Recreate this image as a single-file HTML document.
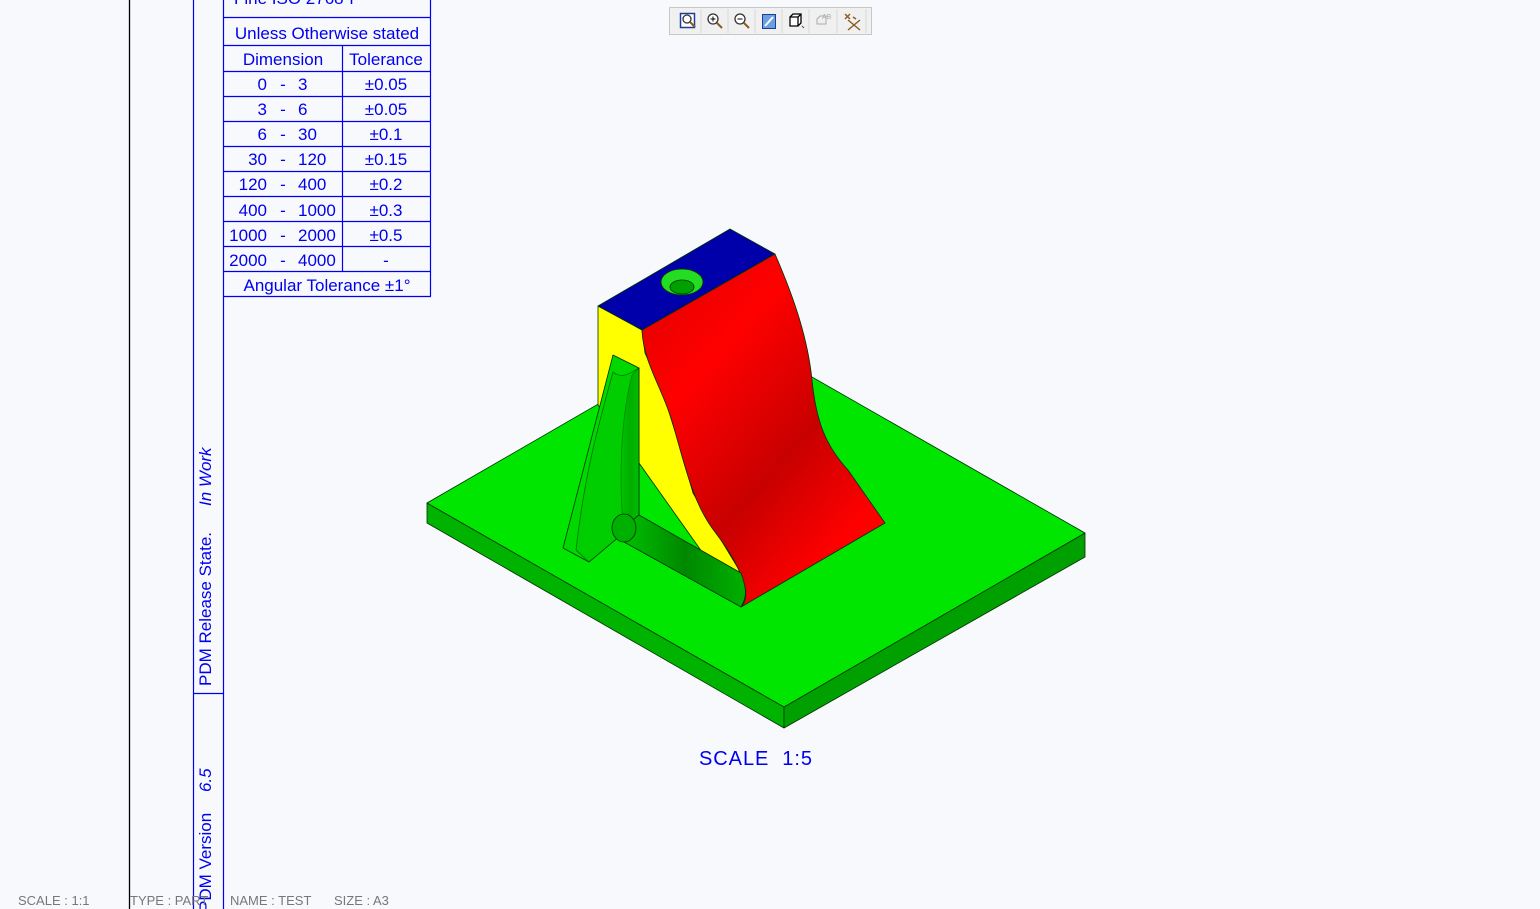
<!DOCTYPE html>
<html><head><meta charset="utf-8"><style>
html,body{margin:0;padding:0;background:#f8f9fd;}
svg{display:block}
text{font-family:"Liberation Sans",sans-serif;}
</style></head><body>
<svg width="1540" height="909" viewBox="0 0 1540 909" xmlns="http://www.w3.org/2000/svg">
<rect width="1540" height="909" fill="#f8f9fd"/>
<line x1="129.5" y1="0" x2="129.5" y2="909" stroke="#000" stroke-width="1.3"/>
<line x1="193.5" y1="0" x2="193.5" y2="909" stroke="#0000ee" stroke-width="1.2"/>
<line x1="223.5" y1="0" x2="223.5" y2="909" stroke="#0000ee" stroke-width="1.2"/>
<line x1="193" y1="693.5" x2="223" y2="693.5" stroke="#0000ee" stroke-width="1.2"/>
<g fill="#0000ee" font-size="17">
<text transform="translate(211,686) rotate(-90)">PDM Release State.</text>
<text transform="translate(211,506) rotate(-90)" font-style="italic">In Work</text>
<text transform="translate(211,912) rotate(-90)">PDM Version</text>
<text transform="translate(211,792) rotate(-90)" font-style="italic">6.5</text>
</g>
<g stroke="#0000ee" stroke-width="1.2" fill="none">
<line x1="430.5" y1="0" x2="430.5" y2="296"/>
<line x1="223" y1="296.5" x2="431" y2="296.5"/>
<line x1="342.5" y1="46" x2="342.5" y2="271"/>
<line x1="223" y1="17.5" x2="431" y2="17.5"/>
<line x1="223" y1="45.5" x2="431" y2="45.5"/>
<line x1="223" y1="71.5" x2="431" y2="71.5"/>
<line x1="223" y1="96.5" x2="431" y2="96.5"/>
<line x1="223" y1="121.5" x2="431" y2="121.5"/>
<line x1="223" y1="146.5" x2="431" y2="146.5"/>
<line x1="223" y1="171.5" x2="431" y2="171.5"/>
<line x1="223" y1="196.5" x2="431" y2="196.5"/>
<line x1="223" y1="221.5" x2="431" y2="221.5"/>
<line x1="223" y1="246.5" x2="431" y2="246.5"/>
<line x1="223" y1="271.5" x2="431" y2="271.5"/>
</g>
<g fill="#0000ee" font-size="17" text-anchor="middle">
<text x="294" y="4">Fine ISO 2768-f</text>
<text x="327" y="39">Unless Otherwise stated</text>
<text x="283" y="65">Dimension</text>
<text x="386" y="65">Tolerance</text>
<text x="386" y="90">±0.05</text>
<text x="386" y="115">±0.05</text>
<text x="386" y="140">±0.1</text>
<text x="386" y="165">±0.15</text>
<text x="386" y="190">±0.2</text>
<text x="386" y="216">±0.3</text>
<text x="386" y="241">±0.5</text>
<text x="386" y="266">-</text>
<text x="327" y="291">Angular Tolerance ±1°</text>
</g>
<g fill="#0000ee" font-size="17">
<g text-anchor="end">
<text x="267" y="90">0</text><text x="267" y="115">3</text><text x="267" y="140">6</text>
<text x="267" y="165">30</text><text x="267" y="190">120</text><text x="267" y="216">400</text>
<text x="267" y="241">1000</text><text x="267" y="266">2000</text>
</g>
<g text-anchor="middle">
<text x="283" y="90">-</text><text x="283" y="115">-</text><text x="283" y="140">-</text><text x="283" y="165">-</text>
<text x="283" y="190">-</text><text x="283" y="216">-</text><text x="283" y="241">-</text><text x="283" y="266">-</text>
</g>
<text x="298" y="90">3</text><text x="298" y="115">6</text><text x="298" y="140">30</text>
<text x="298" y="165">120</text><text x="298" y="190">400</text><text x="298" y="216">1000</text>
<text x="298" y="241">2000</text><text x="298" y="266">4000</text>
</g>
<rect x="669.5" y="7.5" width="202" height="27" fill="#f0f0f0" stroke="#c8c8c8"/>
<g stroke="#d8d8d8"><line x1="701" y1="9" x2="701" y2="33"/><line x1="728" y1="9" x2="728" y2="33"/><line x1="755" y1="9" x2="755" y2="33"/><line x1="782" y1="9" x2="782" y2="33"/><line x1="809" y1="9" x2="809" y2="33"/><line x1="837" y1="9" x2="837" y2="33"/><line x1="866" y1="9" x2="866" y2="33"/></g>
<rect x="680.5" y="13.5" width="14" height="14" fill="#fff" stroke="#1a3f9a" stroke-width="1.5"/>
<circle cx="687" cy="19" r="4" fill="none" stroke="#333" stroke-width="1.3"/><line x1="690" y1="22" x2="695" y2="27" stroke="#8a5a20" stroke-width="2"/>
<circle cx="713" cy="19" r="5" fill="#fff" stroke="#333" stroke-width="1.3"/><path d="M710.5 19h5M713 16.5v5" stroke="#000"/><line x1="717" y1="23" x2="722" y2="28" stroke="#8a5a20" stroke-width="2"/>
<circle cx="740" cy="19" r="5" fill="#fff" stroke="#333" stroke-width="1.3"/><path d="M737.5 19h5" stroke="#000"/><line x1="744" y1="23" x2="749" y2="28" stroke="#8a5a20" stroke-width="2"/>
<rect x="762.5" y="14.5" width="13" height="14" fill="#6aa0e0" stroke="#1a3f9a"/><path d="M765 26l8-9" stroke="#fff" stroke-width="2"/>
<path d="M790 17l3-3h8v9l-3 3h-8z" fill="#fff" stroke="#000" stroke-width="1.3"/><path d="M790 17h8v9M798 17l3-3" fill="none" stroke="#000" stroke-width="1.3"/><path d="M802 26l2 2" stroke="#555"/>
<path d="M817 19l3-3h6v8h-9z" fill="none" stroke="#aaa"/><text x="822" y="19" font-size="7" fill="#aaa">AB</text>
<path d="M845 14l5 5M850 14l-5 5M848 20l12 10M860 20l-12 10M853 17l3 2" stroke="#8a5a20" stroke-width="1.4"/>
<g stroke="#003000" stroke-width="0.8" stroke-linejoin="round">
<polygon points="427,503 784,707 784,728 427,523" fill="#00b300"/>
<polygon points="784,707 1085,533 1085,557 784,728" fill="#00a000"/>
<polygon points="427,503 728,329 1085,533 784,707" fill="#00e600"/>
<polygon points="598,306 642,330 645,353 663,393 680,447 693,493 715,530 741,573 745,587 741,607 598,405" fill="#ffff00"/>
<polygon points="598,306 730,229 775,254 642,330" fill="#0000aa"/>
<ellipse cx="682" cy="282" rx="21" ry="13" fill="#22dd22"/>
<ellipse cx="682" cy="287" rx="12" ry="7" fill="#00a000"/>
<defs><linearGradient id="rg" x1="0" y1="0" x2="1" y2="1.3">
<stop offset="0" stop-color="#dd0000"/><stop offset="0.25" stop-color="#ff0000"/><stop offset="0.5" stop-color="#c80000"/><stop offset="0.7" stop-color="#ff0000"/><stop offset="1" stop-color="#ff0000"/></linearGradient>
<linearGradient id="gg" x1="0" y1="0" x2="1" y2="0"><stop offset="0" stop-color="#00c000"/><stop offset="0.5" stop-color="#008800"/><stop offset="1" stop-color="#00b000"/></linearGradient></defs>
<path d="M642,330 L775,254 C795,300 808,340 812,380 C816,420 825,445 848,470 L885,523 L741,607 C744,604 747,598 745,588 C741,570 730,552 715,532 C690,500 683,455 670,415 C660,385 643,360 642,330 Z" fill="url(#rg)"/>
<polygon points="613,355 639,368 639,520 589,562 563,548" fill="#00d800"/>
<path d="M639,368 L639,520 L624,530 C620,500 618,430 632,375 Z" fill="url(#gg)"/>
<path d="M589,562 L576,550 C585,470 600,420 613,372 C622,380 632,372 639,368 L639,520 Z" fill="#00c800" opacity="0.6"/>
<path d="M624,542 L741,607 C747,597 747,590 741,573 L639,515 C632,520 622,530 624,542Z" fill="url(#gg)"/>
<ellipse cx="624" cy="528" rx="12" ry="14" fill="#00b000"/>
</g>
<text x="699" y="765" font-size="20" fill="#0000ee" textLength="113">SCALE&#160;&#160;1:5</text>
<g fill="#777" font-size="13">
<text x="18" y="905">SCALE : 1:1</text>
<text x="130" y="905">TYPE : PART</text>
<text x="230" y="905">NAME : TEST</text>
<text x="334" y="905">SIZE : A3</text>
</g>
</svg>
</body></html>
